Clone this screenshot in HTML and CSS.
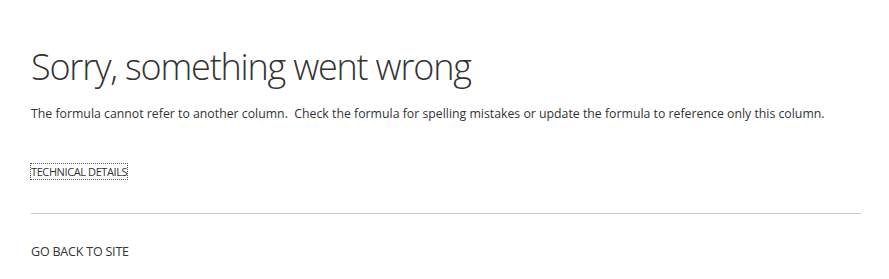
FILE: index.html
```html
<!DOCTYPE html>
<html lang="en">
<head>
    <meta charset="UTF-8">
    <title>Error</title>
    <link rel="stylesheet" href="styles.css">
</head>
<body>
    <div class="error-page">
        <h1 class="error-title">Sorry, something went wrong</h1>
        <p class="error-message">The formula cannot refer to another column.&nbsp; Check the formula for spelling mistakes or update the formula to reference only this column.</p>

        <div class="details">
            <a class="details-link" href="#">TECHNICAL DETAILS</a>
        </div>

        <hr class="divider">

        <div class="back">
            <a class="back-link" href="#">GO BACK TO SITE</a>
        </div>
    </div>
</body>
</html>
```

FILE: styles.css
```css
* {
    box-sizing: border-box;
}

body {
    margin: 0;
    font-family: "Open Sans", "Noto Sans", sans-serif;
    background-color: #fff;
    color: #333;
}

.error-page {
    padding: 40px 28px 0 31px;
}

.error-title {
    margin: 0;
    font-size: 36px;
    font-weight: 300;
    line-height: 54px;
    color: #333;
    letter-spacing: -1.2px;
}

.error-message {
    margin: 11px 0 0 0;
    font-size: 12.3px;
    line-height: 18px;
}

.details {
    margin-top: 36px;
}

.details-link {
    font-size: 11px;
    color: #333;
    text-decoration: none;
    outline: 1px dotted #555;
    letter-spacing: -0.4px;
}

.divider {
    margin: 32px 0 0 0;
    border: none;
    border-top: 1px solid #c8c8c8;
}

.back {
    margin-top: 25px;
}

.back-link {
    font-size: 12.5px;
    color: #333;
    text-decoration: none;
    letter-spacing: -0.2px;
}
```
